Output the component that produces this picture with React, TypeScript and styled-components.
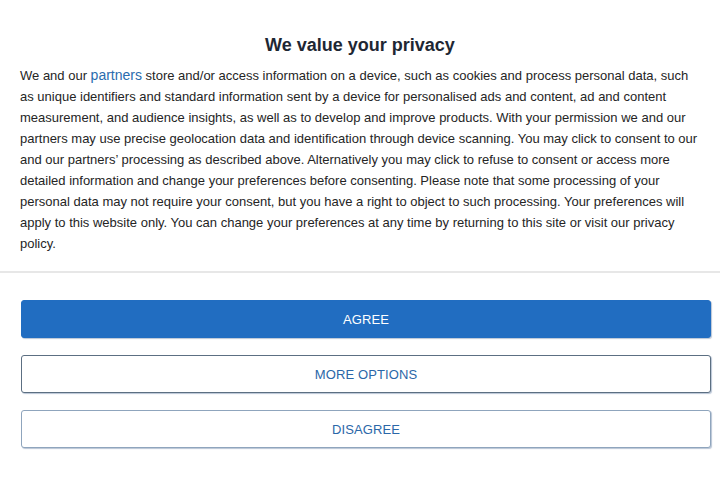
import React from "react";
import styled, { createGlobalStyle } from "styled-components";

const Global = createGlobalStyle`
  html, body { margin: 0; padding: 0; background: #ffffff; }
  body { font-family: "Liberation Sans", Arial, Helvetica, sans-serif; }
  * { box-sizing: border-box; }
`;

const Dialog = styled.div`
  width: 720px;
  height: 480px;
  background: #ffffff;
  display: flex;
  flex-direction: column;
`;

const Content = styled.div`
  padding: 34px 20px 17px 20px;
  border-bottom: 2px solid #e7e7e7;
`;

const Title = styled.h2`
  margin: 0 0 9px 0;
  text-align: center;
  font-size: 18px;
  line-height: 22px;
  font-weight: 700;
  color: #1e2733;
`;

const Body = styled.p`
  margin: 0;
  font-size: 13px;
  line-height: 21px;
  color: #252525;
`;

const PartnerLink = styled.a`
  color: #2a6cae;
  font-size: 14px;
  line-height: 1;
  text-decoration: none;
`;

const Actions = styled.div`
  display: flex;
  flex-direction: column;
  gap: 17px;
  padding: 27px 9px 0 21px;
`;

const Button = styled.button<{ $primary?: boolean; $strong?: boolean }>`
  height: 38px;
  width: 100%;
  border-radius: 3px;
  font-family: "Liberation Sans", Arial, Helvetica, sans-serif;
  font-size: 13px;
  letter-spacing: 0.1px;
  cursor: pointer;
  background: ${(p) => (p.$primary ? "#216dc1" : "#ffffff")};
  color: ${(p) => (p.$primary ? "#ffffff" : "#2b67a8")};
  border: 1px solid
    ${(p) => (p.$primary ? "#216dc1" : p.$strong ? "#5c6f82" : "#8fa5bd")};
  box-shadow: 1px 1px 1px rgba(80, 110, 150, 0.4);
`;

export default function App() {
  return (
    <>
      <Global />
      <Dialog>
        <Content>
          <Title>We value your privacy</Title>
          <Body>
            We and our <PartnerLink href="#">partners</PartnerLink> store and/or
            access information on a device, such as cookies and process personal
            data, such as unique identifiers and standard information sent by a
            device for personalised ads and content, ad and content measurement,
            and audience insights, as well as to develop and improve products.
            With your permission we and our partners may use precise geolocation
            data and identification through device scanning. You may click to
            consent to our and our partners’ processing as described above.
            Alternatively you may click to refuse to consent or access more
            detailed information and change your preferences before consenting.
            Please note that some processing of your personal data may not
            require your consent, but you have a right to object to such
            processing. Your preferences will apply to this website only. You can
            change your preferences at any time by returning to this site or
            visit our privacy policy.
          </Body>
        </Content>
        <Actions>
          <Button $primary>AGREE</Button>
          <Button $strong>MORE OPTIONS</Button>
          <Button>DISAGREE</Button>
        </Actions>
      </Dialog>
    </>
  );
}
